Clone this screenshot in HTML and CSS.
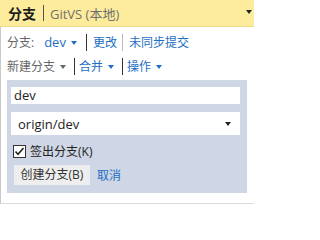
FILE: index.html
```html
<!DOCTYPE html>
<html>
<head>
<meta charset="utf-8">
<link rel="stylesheet" href="styles.css">
</head>
<body>
<div class="win">
  <div class="header">
    <span class="title">分支</span>
    <span class="hsep"></span>
    <span class="sub">GitVS (本地)</span>
    <span class="hdrop"></span>
  </div>
  <div class="content">
    <div class="row">
      <span class="lbl">分支:</span>
      <span class="link dev">dev</span><span class="tri blue"></span>
      <span class="vsep dark"></span>
      <span class="link">更改</span>
      <span class="vsep"></span>
      <span class="link">未同步提交</span>
    </div>
    <div class="row row2">
      <span class="lbl">新建分支</span><span class="tri gray"></span>
      <span class="vsep dark"></span>
      <span class="link">合并</span><span class="tri blue"></span>
      <span class="vsep dark"></span>
      <span class="link">操作</span><span class="tri blue"></span>
    </div>
    <div class="panel">
      <div class="input">dev</div>
      <div class="select"><span>origin/dev</span><span class="stri"></span></div>
      <div class="check">
        <svg class="cbox" width="13" height="13" viewBox="0 0 13 13"><rect x="0.5" y="0.5" width="12" height="12" fill="#fff" stroke="#333"/><path d="M2.5 6.5 L5 9.2 L10.5 3" fill="none" stroke="#222" stroke-width="1.6"/></svg>
        <span>签出分支(K)</span>
      </div>
      <div class="actions">
        <span class="btn">创建分支(B)</span>
        <span class="link">取消</span>
      </div>
    </div>
  </div>
</div>
</body>
</html>
```
FILE: styles.css
```css
html, body {
  margin: 0;
  padding: 0;
  background: #fff;
}
body {
  width: 254px;
  height: 210px;
  overflow: hidden;
  font-family: "Open Sans", "Noto Sans CJK SC", sans-serif;
  font-size: 12px;
  color: #444;
}
.header {
  height: 26px;
  background: #fcec9c;
  border-bottom: 1px solid #ecdc8a;
  display: flex;
  align-items: center;
  padding-left: 8px;
  position: relative;
}
.title {
  font-weight: bold;
  font-size: 14px;
  color: #1e1e1e;
}
.hsep {
  width: 1px;
  height: 16px;
  background: #555;
  margin: 0 6px 0 7px;
}
.sub {
  font-size: 13px;
  color: #707070;
}
.hdrop {
  position: absolute;
  right: 2px;
  top: 10px;
  border-left: 3px solid transparent;
  border-right: 3px solid transparent;
  border-top: 4px solid #222;
}
.content {
  border-left: 1px solid #c9c9c9;
  border-bottom: 1px solid #dcdcdc;
  height: 177px;
  padding-top: 6px;
  box-sizing: border-box;
}
.row {
  display: flex;
  align-items: center;
  height: 18px;
  padding-left: 6px;
  margin-bottom: 6px;
}
.row2 {
  margin-bottom: 5px;
}
.lbl {
  color: #666;
}
.link {
  color: #1e6ec4;
}
.dev {
  margin-left: 10px;
  font-size: 13px;
}
.tri {
  display: inline-block;
  border-left: 3.5px solid transparent;
  border-right: 3.5px solid transparent;
  border-top: 4px solid #1e6ec4;
  margin: 1px 6px 0 5px;
}
.tri.gray {
  border-top-color: #666;
}
.vsep {
  width: 1px;
  height: 17px;
  background: #bbb;
  margin: 0 6px 0 3px;
}
.vsep.dark {
  background: #333;
}
.row2 .vsep {
  margin: 0 4px 0 2px;
}
.row .link + .vsep {
  margin-left: 5px;
}
.panel {
  margin-left: 6px;
  width: 240px;
  height: 113px;
  background: #cfd6e5;
  padding: 7px 7px 0 4px;
  box-sizing: border-box;
}
.input {
  height: 17px;
  background: #fff;
  font-size: 13px;
  line-height: 17px;
  padding-left: 3px;
  color: #222;
}
.select {
  margin-top: 8px;
  height: 23px;
  background: #fff;
  display: flex;
  align-items: center;
  justify-content: space-between;
  padding: 0 9px 0 7px;
  font-size: 13px;
  color: #222;
}
.stri {
  border-left: 3.5px solid transparent;
  border-right: 3.5px solid transparent;
  border-top: 4px solid #222;
}
.check {
  display: flex;
  align-items: center;
  height: 18px;
  margin-top: 7px;
  padding-left: 2px;
  color: #222;
  font-size: 12px;
}
.cbox {
  margin-right: 4px;
}
.actions {
  display: flex;
  align-items: center;
  margin-top: 5px;
}
.btn {
  margin-left: 3px;
  width: 76px;
  height: 20px;
  line-height: 20px;
  text-align: center;
  background: #eeeeee;
  color: #333;
  font-size: 12px;
  margin-right: 7px;
}
```
